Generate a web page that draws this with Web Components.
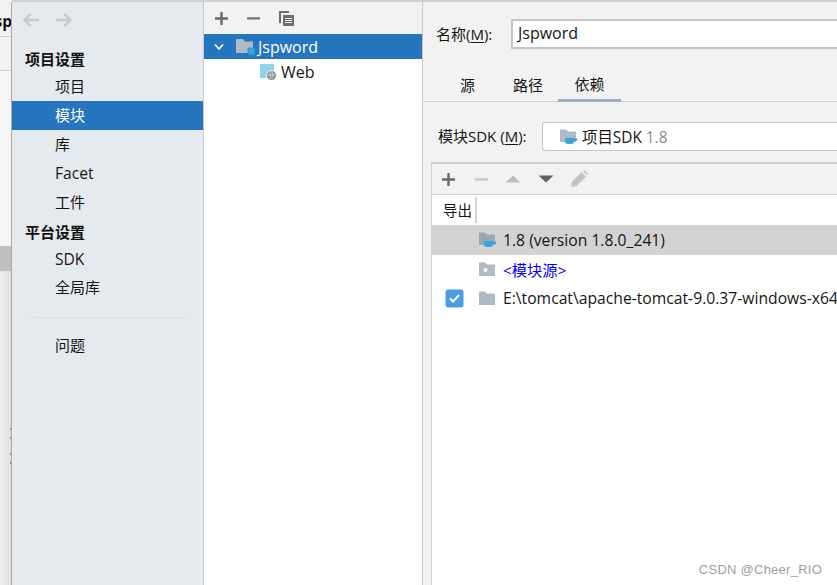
<!DOCTYPE html>
<html><head><meta charset="utf-8">
<style>
html,body{margin:0;padding:0;width:837px;height:585px;overflow:hidden;background:#f2f2f2}
body{font-family:"Open Sans","Noto Sans CJK SC",sans-serif;font-size:15px;color:#161616}
</style></head><body>
<project-dialog></project-dialog>
<script>
const FOLDER='M1 2.5 a1 1 0 0 1 1-1 h5 l2 2 h7 a1 1 0 0 1 1 1 V14 H1 Z';
const CUP='<path d="M6 10h9v3a3 3 0 0 1-3 3H9a3 3 0 0 1-3-3z" fill="#3aa4dc"/><path d="M15 10.500h3v2.500h-3z" fill="#3aa4dc"/>';
function def(name,css,html){
  customElements.define(name,class extends HTMLElement{
    constructor(){super();const s=this.attachShadow({mode:'open'});s.innerHTML='<style>'+css+'</style>'+html;}
  });
}
def('back-strip',`:host{display:flex;flex-direction:column;width:12px;flex:none;overflow:hidden;box-sizing:border-box;background:linear-gradient(90deg,#efefef,#dcdcdc)}
 .t{height:37px;flex:none;font:700 15.500px "Open Sans",sans-serif;color:#111;display:flex;align-items:center;justify-content:flex-end;padding-top:5px;box-sizing:border-box;border-bottom:1px solid #cfcfcf;overflow:hidden;background:#f2f2f2}
 .t span{white-space:nowrap}
 .u{height:34px;flex:none;box-sizing:border-box;border-bottom:1px solid #cfcfcf;background:#f2f2f2}
 .m{height:175px;flex:none;background:#f6f6f6}
 .g{height:25px;flex:none;background:#bfbfbf}
 .r{flex:1;background:
   linear-gradient(#888,#888) right 1px top 157px/1px 2px no-repeat,
   linear-gradient(#888,#888) right 1px top 166px/1px 2px no-repeat,
   linear-gradient(#888,#888) right 1px top 182px/1px 2px no-repeat,
   linear-gradient(#888,#888) right 1px top 191px/1px 2px no-repeat}`,
 `<div class="t"><span>sp</span></div><div class="u"></div><div class="m"></div><div class="g"></div><div class="r"></div>`);

def('side-item',`:host{display:flex;align-items:center;height:29px;padding:0 0 2px 43px;box-sizing:border-box;white-space:nowrap;flex:none}
 :host([selected]){background:#2675bf;color:#fff}
 :host([latin]){font-size:15.600px}
 :host([head]){padding:0 0 0 13px;font-weight:700;color:#111}`,`<slot></slot>`);

def('side-bar',`:host{display:flex;flex-direction:column;width:191px;flex:none;background:#e5eaef;border-right:1px solid #c9c9c9;border-left:1px solid #aaa;margin-left:-1px}
 .nav{height:36px;flex:none;display:flex;align-items:center;gap:15px;padding-left:10px}
 .sep{height:1px;flex:none;background:linear-gradient(90deg,#e5eaef,#dcdfe3 6%,#dcdfe3 94%,#e5eaef);margin:15px 10px 13px 11px}
 .list{display:flex;flex-direction:column;padding-top:7px}`,
 `<div class="nav">
  <svg width="18" height="16" viewBox="0 0 18 16" fill="none" stroke="#c8c8c8" stroke-width="2.400"><path d="M17 8H2.500M8.500 2 2.500 8l6 6"/></svg>
  <svg width="18" height="16" viewBox="0 0 18 16" fill="none" stroke="#c8c8c8" stroke-width="2.400"><path d="M1 8h14.500M9.500 2l6 6-6 6"/></svg>
 </div>
 <div class="list">
  <side-item head style="height:27px">项目设置</side-item>
  <side-item>项目</side-item>
  <side-item selected>模块</side-item>
  <side-item>库</side-item>
  <side-item latin>Facet</side-item>
  <side-item>工件</side-item>
  <side-item head>平台设置</side-item>
  <side-item latin style="height:27px">SDK</side-item>
  <side-item>全局库</side-item>
  <div class="sep"></div>
  <side-item>问题</side-item>
 </div>`);

def('module-tree',`:host{display:flex;flex-direction:column;width:218px;flex:none;background:#fff;border-right:1px solid #c9c9c9}
 .bar{height:32px;background:#f2f2f2;display:flex;align-items:center;padding-left:10px;gap:17px;flex:none}
 .row{display:flex;align-items:center;height:25px;white-space:nowrap;font-size:16px;flex:none}
 .sel{background:#2675bf;color:#fff;padding-left:10px}
 .sel svg.c{margin-right:12px}
 .sel span{margin-left:3px}
 .web{padding-left:55px}
 .web span{margin-left:4px}`,
 `<div class="bar">
  <svg width="15" height="15" viewBox="0 0 15 15"><path d="M6.300 1h2.400v5.300H14v2.400H8.700V14H6.300V8.700H1V6.300h5.300z" fill="#666a6c"/></svg>
  <svg width="15" height="15" viewBox="0 0 15 15"><path d="M1 6.300h13v2.200H1z" fill="#6e6e6e"/></svg>
  <svg width="17" height="17" viewBox="0 0 17 17"><path d="M1 1h10v2H3v10H1z" fill="#6e6e6e"/><path d="M5 5h11v11H5z" fill="#6e6e6e"/><path d="M7 8h7v1H7zM7 10h7v1H7zM7 12h7v1H7z" fill="#e8e8e8"/></svg>
 </div>
 <div class="row sel">
  <svg class="c" width="10" height="8" viewBox="0 0 10 8" fill="none" stroke="#fff" stroke-width="1.600"><path d="M1 1.500l4 4.500 4-4.500"/></svg>
  <svg width="19" height="18" viewBox="0 0 19 18"><path d="M0 2a1 1 0 0 1 1-1h6l2 2.500h8V15H0z" fill="#aebac4"/><path d="M12 10h7v7h-7z" fill="#3aa4dc" stroke="#2675bf" stroke-width=".6"/></svg>
  <span>Jspword</span></div>
 <div class="row web">
  <svg width="18" height="18" viewBox="0 0 18 18"><path d="M1 1h14v14H1z" fill="#8fd3ef"/><circle cx="12.500" cy="12.500" r="5" fill="#8a8f94" stroke="#fff" stroke-width="1"/><path d="M9 12h7M12.500 8.500c-2 2-2 5 0 7M12.500 8.500c2 2 2 5 0 7" stroke="#e8e8e8" stroke-width=".7" fill="none"/></svg>
  <span>Web</span></div>`);

def('tab-strip',`:host{display:flex;height:35px;padding-left:22px;border-bottom:1px solid #cfcfcf;flex:none}`,`<slot></slot>`);
def('tab-item',`:host{display:flex;align-items:center;justify-content:center;height:36px;box-sizing:border-box;width:45px;padding:4px 0 3px;flex:none}
 :host([active]){border-bottom:3px solid #9eabbd;width:63px}`,`<slot></slot>`);

def('dep-row',`:host{display:flex;align-items:center;height:29px;white-space:nowrap;font-size:15.700px;overflow:hidden;flex:none}
 :host([selected]){background:#d3d3d3;height:30px}
 .chk{width:46px;flex:none;padding-left:13px;box-sizing:border-box;display:flex}
 .ico{width:25px;flex:none;display:flex}
 :host([link]){color:#0000ff;font-size:15.300px}
 :host([link]) span{margin-top:-2px}
 :host(:not([link]):not([selected])) span{margin-top:-1px}`,
 `<div class="chk"><slot name="check"></slot></div><div class="ico"><slot name="icon"></slot></div><span><slot></slot></span>`);

def('dep-panel',`:host{display:flex;flex-direction:column;flex:1;margin-left:8px;border-top:2px solid #cfcfcf;border-left:1px solid #cfcfcf;background:#fff;min-height:0;overflow:hidden}
 .bar{height:30px;box-sizing:content-box;background:#f2f2f2;border-bottom:1px solid #cfcfcf;display:flex;align-items:center;padding-left:9px;flex:none}
 .bar svg{flex:none}
 .head{height:30px;flex:none;display:flex;align-items:center;padding-left:11px;background:#fff;font-size:14.500px}
 .head span{display:flex;align-items:center;height:26px;width:32px;border-right:2px solid #d4d4d4;margin-top:-1px}`,
 `<div class="bar">
  <svg width="15" height="15" viewBox="0 0 15 15"><path d="M6.300 1h2.400v5.300H14v2.400H8.700V14H6.300V8.700H1V6.300h5.300z" fill="#666a6c"/></svg>
  <svg width="15" height="15" viewBox="0 0 15 15" style="margin-left:18px"><path d="M1 6.300h13v2.200H1z" fill="#c4c4c4"/></svg>
  <svg width="16" height="15" viewBox="0 0 16 15" style="margin-left:16px"><path d="M8 3.500l7.500 7H.5z" fill="#bdbdbd"/></svg>
  <svg width="16" height="15" viewBox="0 0 16 15" style="margin-left:17px"><path d="M.5 3.500h15l-7.500 7z" fill="#5f6365"/></svg>
  <svg width="18" height="18" viewBox="0 0 18 18" style="margin-left:16px"><path d="M1 17l1-5.500L11.500 2l4.500 4.500L6.500 16zM13 1l1.500-1L18 3.500 17 5z" fill="#c4c4c4"/></svg>
 </div>
 <div class="head"><span>导出</span></div>
 <slot></slot>`);

def('right-pane',`:host{display:flex;flex-direction:column;flex:1;min-width:0;overflow:hidden}
 .name{display:flex;align-items:center;height:30px;margin-top:17px;padding-left:13px;white-space:nowrap;flex:none}
 .name>span{width:75px;flex:none;margin-top:-2px}
 u{text-underline-offset:2px}
 .input{flex:1;height:30px;background:#fff;box-sizing:border-box;display:flex;align-items:center;padding:0 0 2px 5px;font-size:16px;border:solid #c6c6c6;border-width:2px 0 2px 2px}
 .sdk{display:flex;align-items:center;height:29px;margin:20px 0 11px;padding-left:15px;white-space:nowrap;flex:none}
 .sdk>span{width:104px;flex:none;margin-top:-3px}
 .combo{flex:1;height:29px;background:#fff;border:1px solid #c6c6c6;border-right:0;border-radius:3px 0 0 3px;box-sizing:border-box;display:flex;align-items:center;padding-left:16px;gap:4px;font-size:15.400px}
 .combo>span{margin-top:-1px}
 .gray{color:#8c8c8c}`,
 `<div class="name"><span>名称(<u>M</u>):</span><div class="input">Jspword</div></div>
 <tab-strip style="margin-top:17px"><tab-item>源</tab-item><tab-item style="margin:0 7px 0 15px;width:46px">路径</tab-item><tab-item active>依赖</tab-item></tab-strip>
 <div class="sdk"><span>模块SDK (<u>M</u>):</span><div class="combo">
   <svg width="19" height="18" viewBox="0 0 19 18"><path d="${FOLDER}" fill="#aebac4"/>${CUP}</svg>
   <span>项目SDK <span class="gray">1.8</span></span></div></div>
 <dep-panel>
  <dep-row selected><svg slot="icon" width="19" height="18" viewBox="0 0 19 18"><path d="${FOLDER}" fill="#9ba7b1"/>${CUP}</svg>1.8 (version 1.8.0_241)</dep-row>
  <dep-row link><svg slot="icon" width="19" height="18" viewBox="0 0 19 18"><path d="M1 2.500a1 1 0 0 1 1-1h5l2 2h7a1 1 0 0 1 1 1V15H1z" fill="#aebac4"/><circle cx="7.500" cy="9" r="2" fill="#fff"/></svg>&lt;模块源&gt;</dep-row>
  <dep-row><svg slot="check" width="19" height="19" viewBox="0 0 19 19"><rect x=".5" y=".5" width="18" height="18" rx="3" fill="#4d9be3"/><path d="M5 9.500l3 3 6-6.500" fill="none" stroke="#fff" stroke-width="2"/></svg><svg slot="icon" width="19" height="18" viewBox="0 0 19 18"><path d="M1 2.500a1 1 0 0 1 1-1h5l2 2h7a1 1 0 0 1 1 1V15H1z" fill="#aebac4"/></svg>E:\\tomcat\\apache-tomcat-9.0.37-windows-x64</dep-row>
 </dep-panel>`);

def('project-dialog',`:host{display:flex;width:837px;height:585px;position:relative;background:#f2f2f2;overflow:hidden}
 .body{display:flex;flex:1;min-width:0;border-top:2px solid #cfcfcf;height:583px}
 .wm{position:absolute;right:15px;bottom:8px;color:#a0a0a0;font:13px "Liberation Sans",sans-serif;letter-spacing:.25px}`,
 `<back-strip></back-strip><div class="body"><side-bar></side-bar><module-tree></module-tree><right-pane></right-pane></div><div class="wm">CSDN @Cheer_RIO</div>`);
</script>
</body></html>
